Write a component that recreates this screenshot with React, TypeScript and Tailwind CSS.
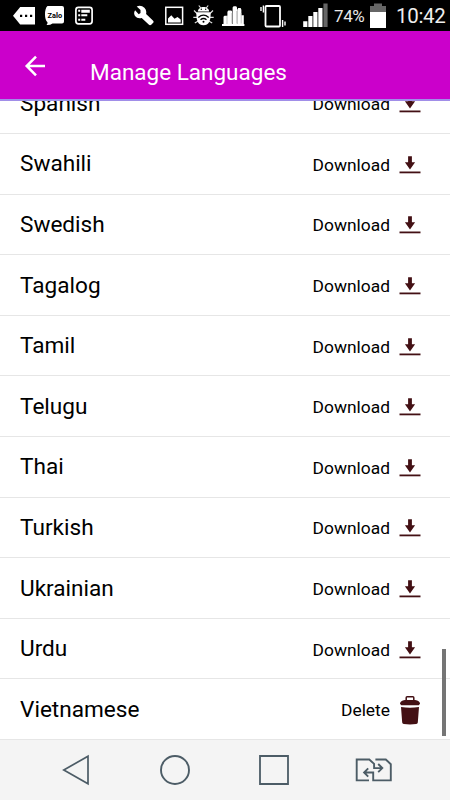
import React from 'react';

type Language = {
  name: string;
  installed?: boolean;
};

const languages: Language[] = [
  { name: 'Spanish' },
  { name: 'Swahili' },
  { name: 'Swedish' },
  { name: 'Tagalog' },
  { name: 'Tamil' },
  { name: 'Telugu' },
  { name: 'Thai' },
  { name: 'Turkish' },
  { name: 'Ukrainian' },
  { name: 'Urdu' },
  { name: 'Vietnamese', installed: true },
];

function DownloadIcon() {
  return (
    <svg className="mt-[4px] h-[30px] w-[22px]" viewBox="0 0 22 30" fill="#431014">
      <path d="M9.1 5.2h3.8v6.1h3.2L11 18.5l-5.1-7.2h3.2z" />
      <path d="M.5 20.5h21v1.8H.5z" />
    </svg>
  );
}

function TrashIcon() {
  return (
    <svg className="mt-[1px] h-[30px] w-[22px]" viewBox="0 0 22 30" fill="#431014">
      <path d="M7.2 5.5V2.7q0-.9.9-.9h5.8q.9 0 .9.9v2.8" fill="none" stroke="#431014" strokeWidth="1.5" />
      <path d="M1 8.7C1 6.4 4 4.9 7 4.9h8c3 0 6 1.5 6 3.8l-1.3 1.5H2.3z" />
      <path d="M2 12q9 1.4 18 0l-1.2 15.4q-.1 1.4-1.6 1.6-6.2.9-12.4 0-1.5-.2-1.6-1.6z" />
    </svg>
  );
}

function StatusBar() {
  return (
    <div className="flex h-[31px] items-start bg-black text-white">
      {/* Message tag */}
      <svg className="ml-[13px] h-[31px] w-[22px]" viewBox="0 0 22 31" fill="white">
        <path d="M0 15.8 7.2 7H22v17.5H7.2z" />
        <path d="M7 14.7h2.2v2.2H7zM12 14.7h2.2v2.2H12zM17 14.7h2.2v2.2H17z" fill="black" />
      </svg>
      {/* Zalo */}
      <svg className="ml-[10px] h-[31px] w-[20px]" viewBox="0 0 20 31" fill="white">
        <path d="M2.5 6H17q2 0 2 2v13.5q0 2-2 2H7.5q-2.5 1.8-6 1.5 1.2-1.2 1-2.7Q0 20 0 14.5 0 8 2.5 6z" />
        <text x="9.8" y="17.8" fontFamily="Roboto, sans-serif" fontWeight="700" fontSize="7.4" textAnchor="middle" fill="black">
          Zalo
        </text>
      </svg>
      {/* News list */}
      <svg className="ml-[10px] h-[31px] w-[18px]" viewBox="0 0 18 31" fill="white">
        <rect x=".9" y="7.4" width="16.2" height="16.4" rx="2.5" fill="none" stroke="white" strokeWidth="1.7" />
        <path d="M3.2 9.8h2v2h-2zM6.3 9.8h8.5v2.9H6.3zM3.2 14.3h2v2h-2zM6.3 14.3h6v2h-6zM3.2 18.8h2v2h-2zM6.3 18.8h4v2h-4z" />
      </svg>
      {/* Wrench */}
      <svg className="ml-[41px] h-[31px] w-[20px]" viewBox="0 0 20 31" fill="white">
        <path d="M2.7 6.4 6.5 10v3L4.7 14.2 1.1 10.3Q-.8 13.3 1 16q2.5 3.2 6.7 2l7 6.6q1.4 1.2 2.8-.1l1.7-1.7q1-1.2-.3-2.4l-6.8-6.5q.8-4-1.7-6.2-3.3-3-7.7-1.3z" />
      </svg>
      {/* Picture */}
      <svg className="ml-[11px] h-[31px] w-[19px]" viewBox="0 0 19 31" fill="white">
        <rect x=".8" y="7.3" width="16.8" height="17" fill="none" stroke="white" strokeWidth="1.5" />
        <path d="M3 22.4v-4l3.3-3.1 3.2 3.5 3-1.8 3.2 2.4v3z" />
      </svg>
      {/* Debug bug */}
      <svg className="ml-[9px] h-[31px] w-[21px]" viewBox="0 0 21 31">
        <path
          d="m5.8 5.5 2 2.5M15.2 5.5l-2 2.5M1 10.5l3.5 3.5M20 10.5 16.5 14M.3 17.3H4M20.7 17.3H17M1.8 23l3.5-2M19.2 23l-3.5-2"
          fill="none"
          stroke="#ddd"
          strokeWidth="1.2"
        />
        <path d="M4.8 11.6C5.4 5.4 15.6 5.4 16.2 11.6z" fill="white" />
        <path d="M3.4 12.2h14.2q.7 13-7.1 13T3.4 12.2z" fill="white" />
        <circle cx="8.3" cy="9.2" r=".7" fill="black" />
        <circle cx="12.7" cy="9.2" r=".7" fill="black" />
        <path d="M5.3 17.4q5.2-4.6 10.4 0M7.5 19.8q3-2.6 6 0" fill="none" stroke="black" strokeWidth="1.3" />
        <circle cx="10.5" cy="21.8" r="1" fill="black" />
      </svg>
      {/* City */}
      <svg className="ml-[8px] h-[31px] w-[23px]" viewBox="0 0 23 31" fill="white">
        <path d="M1.5 24.5v-7.8l1-.9h3v8.7zM5.4 24.5V11.8l1-1.2h2.9l.8.9v13zM10.6 24.5V7.4l1-1.2h2.6l.8 1.2v17.1zM15.2 24.5V9.8l1-1.8h2.4l.8 1.8v14.7zM19.4 24.5v-9.2h2.4v9.2z" />
        <path d="M0 24h22.4v2H0z" />
        <path d="M5 16v8M9.9 13v10.5M14.8 11v12.5M19.2 13v10.5" stroke="#aaa" strokeWidth=".7" />
      </svg>
      {/* Vibrate */}
      <svg className="ml-[15px] h-[31px] w-[26px]" viewBox="0 0 26 31" fill="none" stroke="white">
        <rect x="5.5" y="6" width="14.5" height="20.5" rx="1" strokeWidth="1.8" />
        <path d="M3.4 5.5v7M1 7v4M22.6 20v7M25 21.5v4" strokeWidth="1.4" />
      </svg>
      {/* Signal */}
      <svg className="ml-[17px] h-[31px] w-[25px]" viewBox="0 0 25 31" fill="white">
        <path d="M.2 21.2h4.2V27H.2zM5.3 16h4.2v11H5.3zM10.3 12h4.2v15h-4.2zM15.3 8h4.2v19h-4.2z" />
        <path d="M20.4 3.6h4.2V27h-4.2z" fill="#666" />
      </svg>
      <span className="ml-[6px] w-[36px] text-[17px] leading-[33px] tracking-[-0.4px] text-[#e8e8e8]">74%</span>
      {/* Battery */}
      <svg className="h-[31px] w-[16px]" viewBox="0 0 16 31">
        <path d="M4 3.5h8V6h4v7H0V6h4z" fill="#666" />
        <path d="M0 12h16v16H0z" fill="white" />
      </svg>
      <span className="ml-[10px] text-[20.5px] leading-[33px] tracking-[-0.3px] text-[#eee]">10:42</span>
    </div>
  );
}

function LanguageRow({ name, installed }: Language) {
  return (
    <div className="flex h-[60.6px] shrink-0 items-center border-b border-[#e6e6e6] pr-[29px] pl-5 last:h-[60px] last:border-transparent">
      <span className="mt-[1px] flex-1 text-[22.6px] leading-7">{name}</span>
      <span className="mt-[2px] mr-[9px] text-[17.4px] leading-6">{installed ? 'Delete' : 'Download'}</span>
      {installed ? <TrashIcon /> : <DownloadIcon />}
    </div>
  );
}

function NavigationBar() {
  return (
    <div className="flex h-[60px] items-center bg-[#f4f4f4]">
      <svg className="ml-[62px] h-[32px] w-[28px]" viewBox="0 0 28 32" fill="none" stroke="#4c5c66" strokeWidth="1.7">
        <path d="M1.8 16 26 2.2v27.6z" />
      </svg>
      <svg className="ml-[70px] h-[32px] w-[30px]" viewBox="0 0 30 32" fill="none" stroke="#4c5c66" strokeWidth="1.9">
        <circle cx="15" cy="16" r="14" />
      </svg>
      <svg className="ml-[69px] h-[32px] w-[30px]" viewBox="0 0 30 32" fill="none" stroke="#4c5c66" strokeWidth="1.8">
        <path d="M1 2h28v28H1z" />
      </svg>
      {/* App switch */}
      <svg className="ml-[65px] h-[32px] w-[38px]" viewBox="0 0 38 32" fill="none" stroke="#4c5c66" strokeWidth="1.9">
        <path d="M15 26.4H2.7V5.5h12.6l4.8 4.4v4.2h7.6M24.2 10l4.1 4.1-4.1 4.1" />
        <path d="M21.4 5.5h10.4l5 4.7v16.2H19.2v-7.9h-8.6M14.2 14.4l-4.1 4.1 4.1 4.1" />
      </svg>
    </div>
  );
}

export default function App() {
  return (
    <div className="flex h-[800px] w-[450px] flex-col overflow-hidden bg-white font-[Roboto,sans-serif] text-black">
      <StatusBar />
      <header className="flex h-[70px] items-start border-b-2 border-[#a18ee8] bg-[#cb00cb] text-white">
        <svg className="mt-[23px] ml-[24px] h-[24px] w-[22px]" viewBox="0 0 22 24" fill="none" stroke="white" strokeWidth="2.5">
          <path d="M21 12H2.8M12 2.7 2.7 12l9.3 9.3" />
        </svg>
        <h1 className="mt-[27px] ml-[44px] text-[22.5px] leading-7">Manage Languages</h1>
      </header>
      <main className="relative flex h-[639px] flex-col justify-end overflow-hidden">
        {languages.map((language) => (
          <LanguageRow key={language.name} {...language} />
        ))}
        {/* Scroll thumb */}
        <div className="absolute right-[4px] bottom-[4px] h-[87px] w-[4px] bg-[#757575]" />
      </main>
      <NavigationBar />
    </div>
  );
}
